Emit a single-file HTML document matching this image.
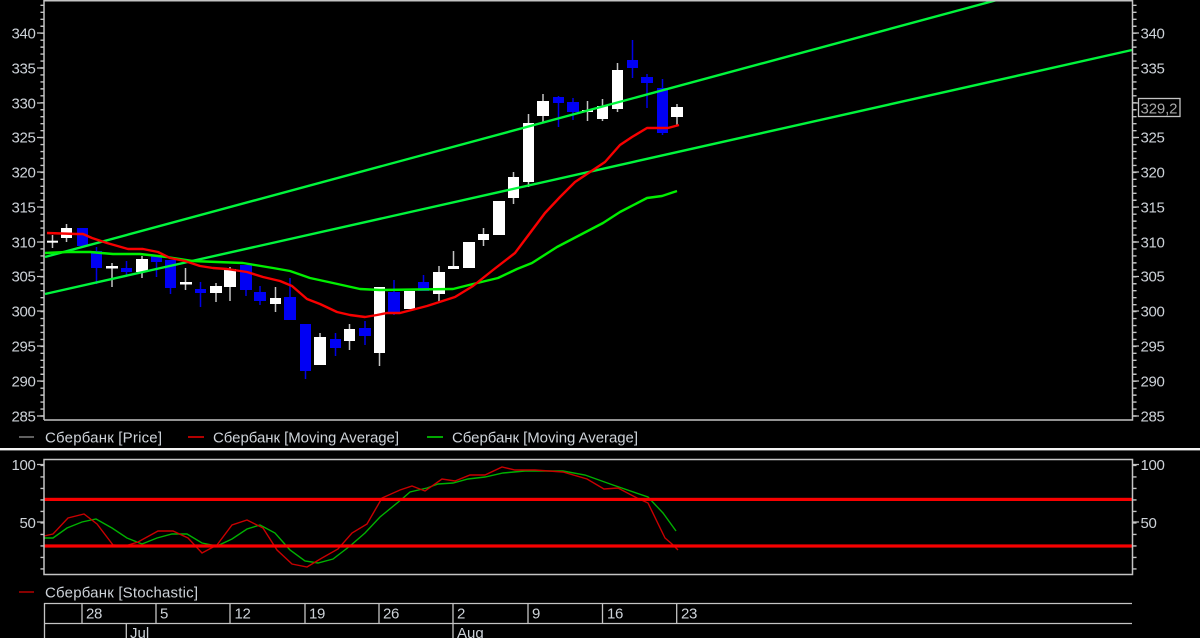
<!DOCTYPE html>
<html>
<head>
<meta charset="utf-8">
<style>
html,body{margin:0;padding:0;background:#000;width:1200px;height:638px;overflow:hidden}
svg{display:block;filter:blur(.3px)}
text{font-family:"Liberation Sans",Arial,sans-serif;font-size:15px;fill:#cdd2d8}
.n{letter-spacing:-.34px}
</style>
</head>
<body>
<svg width="1200" height="638" viewBox="0 0 1200 638" xmlns="http://www.w3.org/2000/svg">
<rect width="1200" height="638" fill="#000"/>

<!-- wicks white -->
<g stroke="#c4c4c4" stroke-width="1.5" fill="none">
<path d="M52.5 235V248M66.5 224V242M112 263V287M142 256V278M185.5 268V290M216 283V302M230 267V301M275.5 287V312M320 333V340M349.5 324V350M379.5 287V366M409.5 291V309M439 266V301M453.5 251V267M483.5 228V246M513.5 172V204M528.5 114V187M543 94V123M587.5 101V121M602.5 99V121M617.5 63V112M677 104V126"/>
</g>
<!-- wicks blue -->
<g stroke="#0000e6" stroke-width="1.5" fill="none">
<path d="M96.5 247V284M126.5 261V275M156.5 256V277M170.5 260V294M200.5 282V307M246 265V296M260 286V305M290 278V297M305.5 324V379M335.5 333V356M365 321V345M394 280V315M423.5 275V291M558.5 96V127M573 98V120M632.5 40V78M647 74V108M662.5 79V135"/>
</g>
<!-- blue bodies -->
<g fill="#0000f4">
<rect x="77" y="228" width="11" height="18"/>
<rect x="91" y="251" width="11" height="17"/>
<rect x="121" y="268" width="11" height="4"/>
<rect x="151" y="256" width="11" height="6"/>
<rect x="165" y="260" width="11" height="28"/>
<rect x="195" y="289" width="11" height="4"/>
<rect x="240" y="265" width="12" height="25"/>
<rect x="254" y="292" width="12" height="9"/>
<rect x="284" y="297" width="12" height="23"/>
<rect x="300" y="324" width="11" height="47"/>
<rect x="330" y="339" width="11" height="9"/>
<rect x="359" y="328" width="12" height="8"/>
<rect x="388" y="292" width="12" height="20"/>
<rect x="418" y="282" width="11" height="9"/>
<rect x="553" y="97" width="11" height="6"/>
<rect x="567" y="102" width="12" height="10"/>
<rect x="627" y="60" width="11" height="8"/>
<rect x="641" y="77" width="12" height="6"/>
<rect x="657" y="88" width="11" height="45"/>
</g>
<!-- white bodies -->
<g fill="#fff">
<rect x="47" y="240.700" width="11" height="2"/>
<rect x="61" y="228" width="11" height="10"/>
<rect x="106" y="266" width="12" height="2.500"/>
<rect x="136" y="259" width="12" height="13"/>
<rect x="180" y="282" width="12" height="2.500"/>
<rect x="210" y="286" width="12" height="7"/>
<rect x="224" y="269" width="12" height="18"/>
<rect x="270" y="298" width="11" height="6"/>
<rect x="314" y="337" width="12" height="28"/>
<rect x="344" y="329" width="11" height="12"/>
<rect x="374" y="287" width="11" height="66"/>
<rect x="404" y="291" width="11" height="18"/>
<rect x="433" y="272" width="12" height="22"/>
<rect x="448" y="266" width="11" height="3"/>
<rect x="463" y="242" width="12" height="26"/>
<rect x="478" y="234" width="11" height="6"/>
<rect x="493" y="201" width="12" height="34"/>
<rect x="508" y="177" width="11" height="21"/>
<rect x="523" y="123" width="11" height="59"/>
<rect x="537" y="101" width="12" height="15"/>
<rect x="582" y="110" width="11" height="2"/>
<rect x="597" y="106" width="11" height="13"/>
<rect x="612" y="70" width="11" height="39"/>
<rect x="671" y="107" width="12" height="10"/>
</g>

<!-- trend lines -->
<g stroke="#00f53c" stroke-width="2.400" fill="none">
<path d="M45 257L997 0"/>
<path d="M45 294L1132 50"/>
</g>
<!-- moving averages -->
<polyline fill="none" stroke="#00f000" stroke-width="2.400" stroke-linejoin="round" points="45,253 67,252 90,252 113,254 140,254 167,257 193,261 217,262 243,263 273,268 290,271 310,278 333,283 360,289 380,290 453,289 473,284 498,278 517,269 532,263 557,247 603,223 620,212 647,198 662,196 677,191"/>
<polyline fill="none" stroke="#f80000" stroke-width="2.400" stroke-linejoin="round" points="47,233 77,234 83,234 92,238 107,243 128,249 143,249 158,252 170,258 185,261 200,266 213,268 227,269 247,272 263,277 280,281 292,286 307,299 320,304 337,312 350,315 365,317 377,315 387,313 400,313 427,306 455,297 473,286 493,270 515,253 530,233 545,213 560,197 575,182 590,172 605,162 620,145 632,137 647,128 668,128 679,125"/>

<!-- main frame -->
<g stroke="#c4c4c4" fill="none">
<path stroke-width="1.500" d="M44 420V.7H1132.500V420H44"/>
<path stroke-width="1.300" d="M37 33H44M37 68H44M37 103H44M37 137.500H44M37 172H44M37 207H44M37 242H44M37 276.500H44M37 311H44M37 346H44M37 381H44M37 416H44"/>
<path stroke-width="1.300" d="M1132 33H1139M1132 68H1139M1132 103H1139M1132 137.500H1139M1132 172H1139M1132 207H1139M1132 242H1139M1132 276.500H1139M1132 311H1139M1132 346H1139M1132 381H1139M1132 416H1139"/>
<line x1="42.200" y1="416.700" x2="42.200" y2="0" stroke-width="3.500" stroke-dasharray="1.400 5.560"/>
<line x1="1134.800" y1="416.700" x2="1134.800" y2="0" stroke-width="3.500" stroke-dasharray="1.400 5.560"/>
</g>

<!-- left labels -->
<g text-anchor="end" class="n">
<text x="35.500" y="38.500">340</text>
<text x="35.500" y="73.500">335</text>
<text x="35.500" y="108.500">330</text>
<text x="35.500" y="142.500">325</text>
<text x="35.500" y="177.500">320</text>
<text x="35.500" y="212.500">315</text>
<text x="35.500" y="247.500">310</text>
<text x="35.500" y="281.500">305</text>
<text x="35.500" y="316.500">300</text>
<text x="35.500" y="351.500">295</text>
<text x="35.500" y="386.500">290</text>
<text x="35.500" y="421.500">285</text>
</g>
<!-- right labels -->
<g class="n">
<text x="1140.500" y="38.500">340</text>
<text x="1140.500" y="73.500">335</text>
<text x="1140.500" y="142.500">325</text>
<text x="1140.500" y="177.500">320</text>
<text x="1140.500" y="212.500">315</text>
<text x="1140.500" y="247.500">310</text>
<text x="1140.500" y="281.500">305</text>
<text x="1140.500" y="316.500">300</text>
<text x="1140.500" y="351.500">295</text>
<text x="1140.500" y="386.500">290</text>
<text x="1140.500" y="421.500">285</text>
</g>
<rect x="1138.500" y="98.500" width="41.500" height="18" fill="#000" stroke="#c4c4c4" stroke-width="1.300"/>
<text x="1140.500" y="113.500" style="fill:#a8a8a8" textLength="37" lengthAdjust="spacing">329,2</text>

<!-- legend -->
<path d="M19 437H34" stroke="#808080" stroke-width="1.500"/>
<text x="45" y="442.500" textLength="117" lengthAdjust="spacing">Сбербанк [Price]</text>
<path d="M188 437H204" stroke="#f00000" stroke-width="1.500"/>
<text x="213" y="442.500" textLength="186" lengthAdjust="spacing">Сбербанк [Moving Average]</text>
<path d="M427 437H443" stroke="#00e000" stroke-width="1.500"/>
<text x="452" y="442.500" textLength="186" lengthAdjust="spacing">Сбербанк [Moving Average]</text>

<!-- separator -->
<rect x="0" y="448" width="1200" height="2.400" fill="#f4f4f4"/>

<!-- stochastic panel -->
<polyline fill="none" stroke="#00b000" stroke-width="1.400" points="44,538 53,538 67,528 82,522 96,519 112,528 127,538 142,544 157,538 172,534 187,534 202,543 217,546 232,539 247,529 260,525 275,533 290,550 305,561 318,563 333,559 350,546 365,533 380,517 402,499 410,492 427,488 438,484 453,483 468,479 485,477 503,473 525,471 563,471 585,475 613,485 648,497 663,513 676,531"/>
<polyline fill="none" stroke="#c80000" stroke-width="1.400" points="44,536 53,534 68,518 84,514 97,524 113,545 125,546 138,542 158,531 173,531 188,538 202,553 217,545 232,525 247,520 263,528 277,550 292,564 307,567 322,558 338,549 352,533 367,524 382,498 400,490 412,486 425,491 442,479 455,481 470,475 485,475 502,467 515,470 535,470 563,472 587,479 604,489 618,488 637,498 648,503 665,538 672,544 678,550"/>
<rect x="44" y="497.800" width="1088" height="3.200" fill="#f80000"/>
<rect x="44" y="544.400" width="1088" height="3.200" fill="#f80000"/>
<g stroke="#c4c4c4" fill="none">
<path stroke-width="1.500" d="M44 459.500H1132.500V574.500H44Z"/>
<path stroke-width="1.300" d="M37 464.500H44M37 522H44M1132 464.500H1139M1132 522H1139"/>
<line x1="42.200" y1="464.700" x2="42.200" y2="572" stroke-width="3.500" stroke-dasharray="1.400 10.100"/>
<line x1="1134.800" y1="464.700" x2="1134.800" y2="572" stroke-width="3.500" stroke-dasharray="1.400 10.100"/>
</g>
<g class="n">
<text x="35.500" y="470" text-anchor="end">100</text>
<text x="35.500" y="528" text-anchor="end">50</text>
<text x="1140.500" y="470">100</text>
<text x="1140.500" y="528">50</text>
</g>

<path d="M19 592H34" stroke="#d00000" stroke-width="1.300"/>
<text x="45" y="597.500" textLength="153" lengthAdjust="spacing">Сбербанк [Stochastic]</text>

<!-- time axis -->
<g stroke="#c4c4c4" stroke-width="1.300" fill="none">
<path d="M44 603.500H1132M44 623.500H1132"/>
<path d="M44.500 603V638M82 603V623M156 603V623M230 603V623M305 603V623M379 603V623M453 603V638M528 603V623M602.500 603V623M676.700 603V623M126.300 623V638"/>
</g>
<g class="n">
<text x="86" y="618.500">28</text>
<text x="160" y="618.500">5</text>
<text x="234.500" y="618.500">12</text>
<text x="309" y="618.500">19</text>
<text x="383" y="618.500">26</text>
<text x="457" y="618.500">2</text>
<text x="532" y="618.500">9</text>
<text x="607" y="618.500">16</text>
<text x="681" y="618.500">23</text>
</g>
<text x="130" y="638">Jul</text>
<text x="457" y="638">Aug</text>
</svg>
</body>
</html>
